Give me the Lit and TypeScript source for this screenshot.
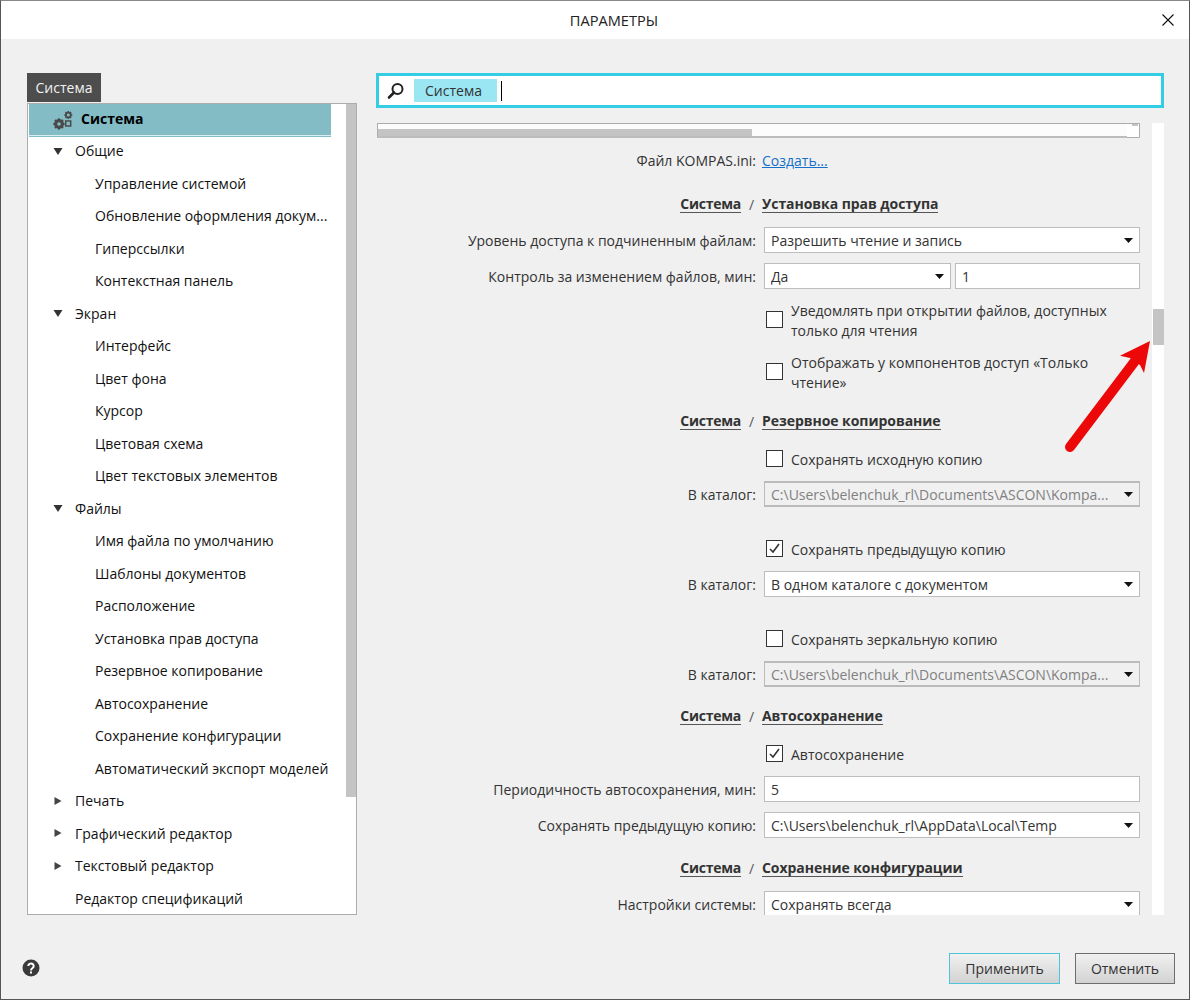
import { LitElement, html, css, svg } from "lit";
import { customElement } from "lit/decorators.js";

type TreeItem = { t: string; lvl: 0 | 1 | 2; arrow?: "down" | "right" };

const TREE: TreeItem[] = [
  { t: "Общие", lvl: 1, arrow: "down" },
  { t: "Управление системой", lvl: 2 },
  { t: "Обновление оформления докум...", lvl: 2 },
  { t: "Гиперссылки", lvl: 2 },
  { t: "Контекстная панель", lvl: 2 },
  { t: "Экран", lvl: 1, arrow: "down" },
  { t: "Интерфейс", lvl: 2 },
  { t: "Цвет фона", lvl: 2 },
  { t: "Курсор", lvl: 2 },
  { t: "Цветовая схема", lvl: 2 },
  { t: "Цвет текстовых элементов", lvl: 2 },
  { t: "Файлы", lvl: 1, arrow: "down" },
  { t: "Имя файла по умолчанию", lvl: 2 },
  { t: "Шаблоны документов", lvl: 2 },
  { t: "Расположение", lvl: 2 },
  { t: "Установка прав доступа", lvl: 2 },
  { t: "Резервное копирование", lvl: 2 },
  { t: "Автосохранение", lvl: 2 },
  { t: "Сохранение конфигурации", lvl: 2 },
  { t: "Автоматический экспорт моделей", lvl: 2 },
  { t: "Печать", lvl: 1, arrow: "right" },
  { t: "Графический редактор", lvl: 1, arrow: "right" },
  { t: "Текстовый редактор", lvl: 1, arrow: "right" },
  { t: "Редактор спецификаций", lvl: 1 },
];

const gear = (cx: number, cy: number, r: number, hole: number) => {
  const teeth = [0, 45, 90, 135, 180, 225, 270, 315].map(
    (a) =>
      svg`<rect x=${cx - 0.8} y=${cy - r - 0.8} width="1.6" height="2" fill="#4a4a4a" transform="rotate(${a} ${cx} ${cy})"></rect>`
  );
  return svg`${teeth}<circle cx=${cx} cy=${cy} r=${(r + hole) / 2} fill="none" stroke="#4a4a4a" stroke-width=${r - hole}></circle>`;
};

@customElement("app-root")
export class AppRoot extends LitElement {
  static styles = css`
    :host {
      display: block;
      width: 1190px;
      height: 1000px;
      font-family: "Open Sans", "Noto Sans", sans-serif;
      font-size: 14px;
      color: #333;
      overflow: hidden;
    }
    .win {
      box-sizing: border-box;
      width: 1190px;
      height: 1000px;
      background: #f0f0f0;
      border: 1px solid #555;
      border-top-color: #888;
      display: flex;
      flex-direction: column;
    }
    .title {
      height: 38px;
      background: #fff;
      display: flex;
      align-items: center;
      justify-content: center;
      position: relative;
      color: #222;
      flex: none;
      font-size: 14.6px;
      padding-left: 38px;
      box-sizing: border-box;
    }
    .close {
      position: absolute;
      right: 15px;
      top: 13px;
      width: 12px;
      height: 12px;
    }
    .main {
      flex: 1;
      display: flex;
      padding: 34px 25px 0 26px;
      min-height: 0;
    }
    .left {
      width: 330px;
      flex: none;
      margin-right: 19px;
      display: flex;
      flex-direction: column;
    }
    .tab {
      align-self: flex-start;
      height: 29px;
      width: 74px;
      background: #4d4d4d;
      color: #f2f2f2;
      display: flex;
      align-items: center;
      justify-content: center;
    }
    .tree {
      box-sizing: border-box;
      margin-top: 1px;
      width: 330px;
      height: 812px;
      background: #fff;
      border: 1px solid #adadad;
      position: relative;
      padding-left: 1px;
      color: #111;
    }
    .tree-scroll {
      position: absolute;
      top: 0;
      right: 0;
      width: 10px;
      height: 693px;
      background: #c4c4c4;
    }
    .sel {
      width: 278px;
      height: 29px;
      padding-bottom: 2px;
      padding-left: 24px;
      background: #84bcc6;
      border-bottom: 1px solid #d8eef2;
      box-shadow: 0 1px 0 #84bcc6;
      display: flex;
      align-items: center;
      font-weight: 700;
      color: #000;
      margin-bottom: -1.75px;
    }
    .sel svg {
      width: 20px;
      height: 20px;
      margin-right: 8px;
      flex: none;
      position: relative;
      top: 1px;
    }
    .row {
      height: 32.5px;
      display: flex;
      align-items: center;
      white-space: nowrap;
    }
    .l1 {
      padding-left: 46px;
    }
    .l2 {
      padding-left: 66px;
    }
    .arrow {
      width: 10px;
      height: 10px;
      margin-left: -22px;
      margin-right: 12px;
      flex: none;
    }
    .right {
      flex: 1;
      min-width: 0;
      display: flex;
      flex-direction: column;
    }
    .search {
      box-sizing: border-box;
      width: 788px;
      height: 35px;
      background: #fff;
      border: 3px solid #33cde6;
      display: flex;
      align-items: center;
      padding-left: 8px;
      flex: none;
    }
    .search svg {
      width: 18px;
      height: 18px;
      margin-right: 9px;
      flex: none;
    }
    .chip {
      width: 83px;
      height: 23px;
      background: #9ae6f3;
      color: #333;
      display: flex;
      align-items: center;
      padding-left: 11px;
      box-sizing: border-box;
    }
    .caret {
      width: 1px;
      height: 20px;
      background: #000;
      margin-left: 4px;
    }
    .pane {
      margin-top: 15px;
      margin-left: 1px;
      display: flex;
      height: 792px;
    }
    .form {
      width: 763px;
      height: 792px;
      overflow: hidden;
      flex: none;
    }
    .hbar {
      box-sizing: border-box;
      height: 15px;
      background: #fcfcfc;
      border: 1px solid #adadad;
      border-bottom: 2px solid #bdbdbd;
      position: relative;
    }
    .hbar i {
      position: absolute;
      left: 0;
      bottom: 0;
      width: 374px;
      height: 7px;
      background: #c4c4c4;
    }
    .hbar b {
      position: absolute;
      right: 0;
      top: 0;
      bottom: -2px;
      width: 12px;
      background: #fff;
      border-bottom: 1px solid #adadad;
      box-sizing: border-box;
    }
    .hbar b::before {
      content: "";
      position: absolute;
      right: 1px;
      top: 0;
      width: 6px;
      height: 2px;
      background: #c4c4c4;
    }
    .vbar {
      margin-left: 12px;
      width: 12px;
      height: 792px;
      background: #fff;
      position: relative;
    }
    .vbar i {
      position: absolute;
      left: 1px;
      right: 0;
      top: 186px;
      height: 36px;
      background: #c4c4c4;
    }
    .line {
      display: grid;
      grid-template-columns: 380px 376px;
      column-gap: 7px;
      align-items: center;
      min-height: 26px;
    }
    .lab {
      text-align: right;
      white-space: nowrap;
      padding-right: 1px;
    }
    .ctrl {
      display: flex;
      gap: 4px;
      min-width: 0;
    }
    a {
      color: #1470c8;
      text-decoration: underline;
      margin-left: -2px;
    }
    .sec {
      display: grid;
      grid-template-columns: 364px 21px 1fr;
      font-weight: 700;
      height: 20px;
      align-items: center;
      color: #333;
      letter-spacing: -0.05px;
    }
    .sec u {
      text-decoration: none;
      line-height: 17px;
      justify-self: end;
      border-bottom: 1px solid #555;
      letter-spacing: -0.25px;
    }
    .sec u.n {
      justify-self: start;
      letter-spacing: -0.05px;
    }
    .sec span {
      font-weight: 400;
      text-align: center;
      color: #555;
    }
    .select,
    .input {
      box-sizing: border-box;
      height: 26px;
      flex: 1;
      min-width: 0;
      background: #fff;
      border: 1px solid #bdbdbd;
      display: flex;
      align-items: center;
      padding: 0 6px;
      white-space: nowrap;
    }
    .select.w {
      flex: 0 0 187px;
    }
    .select.off {
      background: #f0f0f0;
      color: #808080;
      border-color: #bbb;
      border-width: 2px 1px;
    }
    .select .v {
      flex: 1;
      overflow: hidden;
      min-width: 0;
    }
    .select svg {
      width: 9px;
      height: 5px;
      flex: none;
      margin-left: 4px;
    }
    .check {
      display: flex;
      gap: 8px;
      align-items: center;
      padding-left: 2px;
      line-height: 20px;
      width: 350px;
    }
    .box {
      box-sizing: border-box;
      width: 17px;
      height: 17px;
      margin-top: -3px;
      border: 1px solid #333;
      background: #fff;
      flex: none;
      display: flex;
      align-items: center;
      justify-content: center;
    }
    .box svg {
      width: 13px;
      height: 13px;
    }
    .foot {
      height: 84px;
      flex: none;
      display: flex;
      align-items: center;
      padding: 23px 14px 0 21px;
      box-sizing: border-box;
    }
    .help {
      width: 18px;
      height: 18px;
      margin-right: auto;
      margin-top: -2px;
    }
    .btn {
      box-sizing: border-box;
      height: 31px;
      display: flex;
      align-items: center;
      justify-content: center;
      background: linear-gradient(#f1f1f1, #d2d2d2);
      border: 1px solid #6e6e6e;
      color: #333;
    }
    .apply {
      width: 111px;
      border-color: #4ec4da;
      margin-right: 15px;
    }
    .cancel {
      width: 100px;
    }
    .arrow-mark {
      position: absolute;
      left: 1050px;
      top: 330px;
      width: 110px;
      height: 130px;
      pointer-events: none;
    }
    .m-8 { margin-top: 8px; }
    .m-9 { margin-top: 9px; }
    .m-10 { margin-top: 10px; }
    .m-12 { margin-top: 12px; }
    .m-13 { margin-top: 13px; }
    .m-16 { margin-top: 16px; }
    .m-18 { margin-top: 18px; }
    .m-19 { margin-top: 19px; }
    .m-20 { margin-top: 20px; }
    .m-21 { margin-top: 21px; }
    .m-30 { margin-top: 30px; }
  `;

  private arrow(kind?: "down" | "right") {
    if (!kind) return "";
    return html`<svg class="arrow" viewBox="0 0 10 10">
      ${kind === "down"
        ? svg`<path d="M.5 2h9L5 9z" fill="#333"></path>`
        : svg`<path d="M1.5 1v8L8.5 5z" fill="#444"></path>`}
    </svg>`;
  }

  private select(v: string, cls = "") {
    return html`<div class="select ${cls}">
      <span class="v">${v}</span>
      <svg viewBox="0 0 9 5"><path d="M0 0h9L4.5 5z" fill="#111"></path></svg>
    </div>`;
  }

  private selLine(lab: string, v: string, m: string, cls = "") {
    return html`<div class="line ${m}">
      <div class="lab">${lab}</div>
      <div class="ctrl">${this.select(v, cls)}</div>
    </div>`;
  }

  private check(text: unknown, checked: boolean, m: string) {
    return html`<div class="line ${m}">
      <div></div>
      <div class="check">
        <div class="box">
          ${checked
            ? html`<svg viewBox="0 0 13 13"><path d="M2 7l3 3 6-8" fill="none" stroke="#333" stroke-width="1.6"></path></svg>`
            : ""}
        </div>
        <div>${text}</div>
      </div>
    </div>`;
  }

  private sec(name: string, m: string) {
    return html`<div class="sec ${m}"><u>Система</u><span>/</span><u class="n">${name}</u></div>`;
  }

  render() {
    const path = "C:\\Users\\belenchuk_rl\\Documents\\ASCON\\Kompa...";
    return html`
      <div class="win">
        <div class="title">
          ПАРАМЕТРЫ
          <svg class="close" viewBox="0 0 12 12"><path d="M.5.5l11 11M11.5.5l-11 11" stroke="#111" stroke-width="1.1"></path></svg>
        </div>
        <div class="main">
          <div class="left">
            <div class="tab">Система</div>
            <div class="tree">
              <div class="tree-scroll"></div>
              <div class="sel">
                <svg viewBox="0 0 20 20">
                  ${gear(6, 14, 5, 1.8)}
                  ${gear(15.3, 5, 3.2, 1.5)}
                  <rect x="12.7" y="11" width="5" height="5" fill="none" stroke="#4a4a4a" stroke-width="1.5"></rect>
                </svg>
                Система
              </div>
              ${TREE.map(
                (r) => html`<div class="row l${r.lvl}">${this.arrow(r.arrow)}${r.t}</div>`
              )}
            </div>
          </div>
          <div class="right">
            <div class="search">
              <svg viewBox="0 0 18 18">
                <circle cx="10.5" cy="7" r="5" fill="none" stroke="#222" stroke-width="2"></circle>
                <path d="M7 10.5L2 15.5" stroke="#222" stroke-width="2.6" stroke-linecap="round"></path>
              </svg>
              <div class="chip">Система</div>
              <div class="caret"></div>
            </div>
            <div class="pane">
              <div class="form">
                <div class="hbar"><i></i><b></b></div>
                <div class="line m-9">
                  <div class="lab">Файл KOMPAS.ini:</div>
                  <div class="ctrl"><a>Создать...</a></div>
                </div>
                ${this.sec("Установка прав доступа", "m-21")}
                ${this.selLine("Уровень доступа к подчиненным файлам:", "Разрешить чтение и запись", "m-13")}
                <div class="line m-10">
                  <div class="lab">Контроль за изменением файлов, мин:</div>
                  <div class="ctrl">
                    ${this.select("Да", "w")}
                    <div class="input">1</div>
                  </div>
                </div>
                ${this.check(html`Уведомлять при открытии файлов, доступных<br />только для чтения`, false, "m-12")}
                ${this.check(html`Отображать у компонентов доступ «Только<br />чтение»`, false, "m-12")}
                ${this.sec("Резервное копирование", "m-18")}
                ${this.check("Сохранять исходную копию", false, "m-16")}
                ${this.selLine("В каталог:", path, "m-8", "off")}
                ${this.check("Сохранять предыдущую копию", true, "m-30")}
                ${this.selLine("В каталог:", "В одном каталоге с документом", "m-8")}
                ${this.check("Сохранять зеркальную копию", false, "m-30")}
                ${this.selLine("В каталог:", path, "m-8", "off")}
                ${this.sec("Автосохранение", "m-19")}
                ${this.check("Автосохранение", true, "m-16")}
                <div class="line m-8">
                  <div class="lab">Периодичность автосохранения, мин:</div>
                  <div class="ctrl"><div class="input">5</div></div>
                </div>
                ${this.selLine("Сохранять предыдущую копию:", "C:\\Users\\belenchuk_rl\\AppData\\Local\\Temp", "m-10")}
                ${this.sec("Сохранение конфигурации", "m-20")}
                ${this.selLine("Настройки системы:", "Сохранять всегда", "m-13")}
              </div>
              <div class="vbar"><i></i></div>
            </div>
          </div>
        </div>
        <div class="foot">
          <svg class="help" viewBox="0 0 18 18">
            <circle cx="9" cy="9" r="8.5" fill="#3a3a3a"></circle>
            <path d="M6.3 7a2.7 2.5 0 1 1 4.3 2c-1.1.8-1.6 1.2-1.6 2.4" fill="none" stroke="#fff" stroke-width="2"></path>
            <rect x="8" y="12.5" width="2" height="2" fill="#fff"></rect>
          </svg>
          <div class="btn apply">Применить</div>
          <div class="btn cancel">Отменить</div>
        </div>
      </div>
      <svg class="arrow-mark" viewBox="0 0 110 130">
        <path d="M20 117L85 31" stroke="#ec0808" stroke-width="10" stroke-linecap="round" fill="none"></path>
        <path d="M100 11L70 25.7 80 28 90 35 94 43z" fill="#ec0808"></path>
      </svg>
    `;
  }
}
